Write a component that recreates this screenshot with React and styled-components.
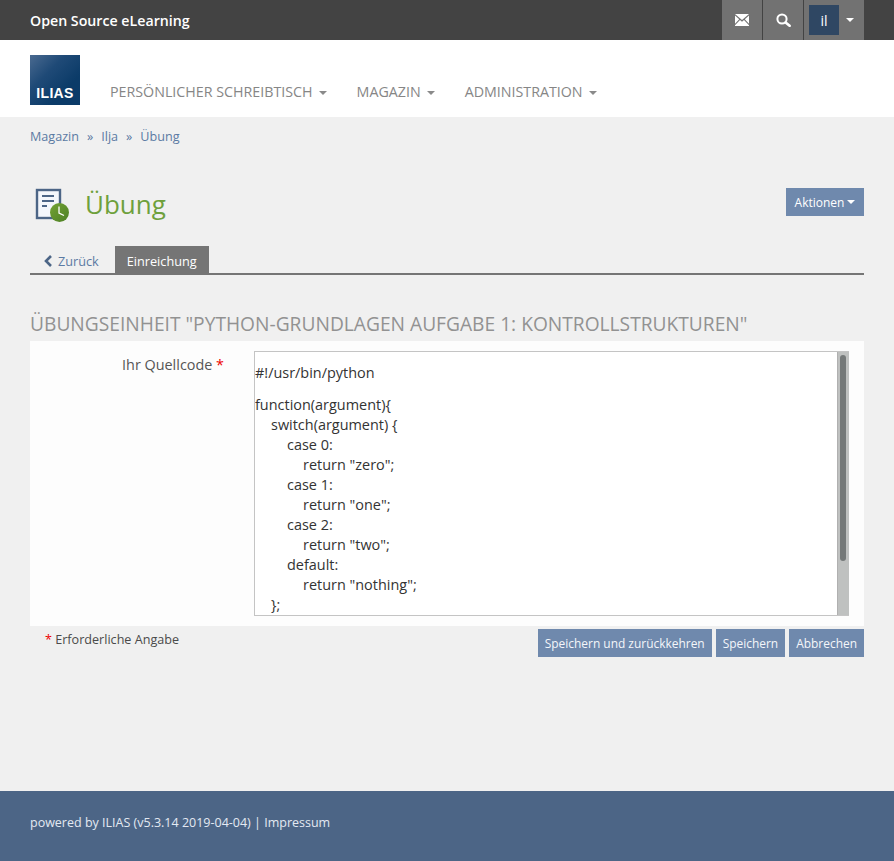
import React from 'react'
import styled, { createGlobalStyle } from 'styled-components'

const GlobalStyle = createGlobalStyle`
  html, body {
    margin: 0;
    padding: 0;
    background: #f0f0f0;
    font-family: "Open Sans", "Noto Sans", sans-serif;
    font-size: 13px;
    color: #4a4a4a;
  }
  * { box-sizing: border-box; }
`

const codeLines = [
  [0, 'function(argument){'],
  [1, 'switch(argument) {'],
  [2, 'case 0:'],
  [3, 'return "zero";'],
  [2, 'case 1:'],
  [3, 'return "one";'],
  [2, 'case 2:'],
  [3, 'return "two";'],
  [2, 'default:'],
  [3, 'return "nothing";'],
  [1, '};'],
]

const App = () => {
  return (
    <Page>
      <GlobalStyle />
      <TopBar>
        <Brand>Open Source eLearning</Brand>
        <TopActions>
          <TopButton>
            <svg width="14" height="12" viewBox="0 0 14 12">
              <path fill="#fff" d="M0 0h14L7 6zM0 1.6l4.2 3.7L0 9.8zM14 1.6v8.2L9.8 5.3zM5 6l2 1.8L9 6l5 5.2V12H0v-.8z" />
            </svg>
          </TopButton>
          <TopButton>
            <svg width="15" height="14" viewBox="0 0 15 14" fill="none" stroke="#fff">
              <circle cx="6" cy="6" r="4.6" strokeWidth="2" />
              <path d="m9.6 9.4 4 3.4" strokeWidth="2.6" strokeLinecap="round" />
            </svg>
          </TopButton>
          <UserButton>
            <Avatar>il</Avatar>
            <Caret $color="#fff" />
          </UserButton>
        </TopActions>
      </TopBar>

      <Header>
        <Logo>ILIAS</Logo>
        <Nav>
          <NavItem>PERSÖNLICHER SCHREIBTISCH<NavCaret $color="#8a8a8a" /></NavItem>
          <NavItem>MAGAZIN<NavCaret $color="#8a8a8a" /></NavItem>
          <NavItem>ADMINISTRATION<NavCaret $color="#8a8a8a" /></NavItem>
        </Nav>
      </Header>

      <Main>
        <Breadcrumbs>
          <a>Magazin</a>
          <Sep>»</Sep>
          <a>Ilja</a>
          <Sep>»</Sep>
          <a>Übung</a>
        </Breadcrumbs>

        <TitleRow>
          <TitleLeft>
            <svg width="36" height="36" viewBox="0 0 36 36">
              <defs>
                <linearGradient id="clockFill" x1="0" y1="0" x2="1" y2="1">
                  <stop offset="0" stopColor="#74a334" />
                  <stop offset="1" stopColor="#4c7f25" />
                </linearGradient>
              </defs>
              <rect x="2" y="3" width="23" height="28" fill="#f3f6fb" stroke="#4c6586" strokeWidth="2.4" />
              <path d="M7 8h12v2H7zM7 13h12v2H7zM7 18h5v2H7z" fill="#4c6586" />
              <circle cx="24.5" cy="25.5" r="9.5" fill="url(#clockFill)" />
              <path d="M24 19.5V26l5 2.5" fill="none" stroke="#fff" strokeWidth="1.3" />
            </svg>
            <Title>Übung</Title>
          </TitleLeft>
          <ActionButton>Aktionen <Caret $color="#fff" /></ActionButton>
        </TitleRow>

        <Tabs>
          <BackTab>
            <svg width="10" height="12" viewBox="0 0 10 12">
              <path d="M8 1 3 6l5 5" fill="none" stroke="#4c6586" strokeWidth="2.6" />
            </svg>
            Zurück
          </BackTab>
          <ActiveTab>Einreichung</ActiveTab>
        </Tabs>

        <SectionTitle>ÜBUNGSEINHEIT "PYTHON-GRUNDLAGEN AUFGABE 1: KONTROLLSTRUKTUREN"</SectionTitle>

        <FormPanel>
          <FieldLabel>Ihr Quellcode <Required>*</Required></FieldLabel>
          <Editor>
            <Code>
              <CodePara>#!/usr/bin/python</CodePara>
              {codeLines.map(([indent, text], i) => (
                <CodeLine key={i} $indent={indent}>{text}</CodeLine>
              ))}
            </Code>
            <Track>
              <Thumb />
            </Track>
          </Editor>
        </FormPanel>

        <FormFooter>
          <RequiredNote><Required>*</Required> Erforderliche Angabe</RequiredNote>
          <Buttons>
            <FormButton>Speichern und zurückkehren</FormButton>
            <FormButton>Speichern</FormButton>
            <FormButton>Abbrechen</FormButton>
          </Buttons>
        </FormFooter>
      </Main>

      <Footer>
        <span>powered by ILIAS (v5.3.14 2019-04-04) | Impressum</span>
      </Footer>
    </Page>
  )
}

export default App

const Page = styled.div`
  width: 894px;
  height: 861px;
  display: flex;
  flex-direction: column;
  overflow: hidden;
`

const TopBar = styled.div`
  height: 40px;
  flex: none;
  background: #434343;
  padding: 0 30px;
  display: flex;
  align-items: center;
  justify-content: space-between;
`

const Brand = styled.div`
  color: #fff;
  font-size: 14.2px;
  font-weight: 600;
`

const TopActions = styled.div`
  display: flex;
  height: 40px;
  gap: 1px;
`

const TopButton = styled.div`
  width: 40px;
  background: #727272;
  display: flex;
  align-items: center;
  justify-content: center;
`

const UserButton = styled.div`
  width: 60px;
  background: #727272;
  padding-left: 5px;
  display: flex;
  align-items: center;
`

const Avatar = styled.div`
  width: 30px;
  height: 30px;
  background: #2f4763;
  color: #fff;
  font-size: 14px;
  display: flex;
  align-items: center;
  justify-content: center;
  margin-right: 7px;
`

const Caret = styled.span`
  display: inline-block;
  width: 0;
  height: 0;
  vertical-align: middle;
  border-top: 4px solid ${p => p.$color};
  border-left: 4px solid transparent;
  border-right: 4px solid transparent;
`

const NavCaret = styled(Caret)`
  margin-left: 6px;
`

const Header = styled.div`
  height: 77px;
  flex: none;
  background: #fff;
  padding: 15px 30px 0;
  display: flex;
`

const Logo = styled.div`
  width: 50px;
  height: 50px;
  background: linear-gradient(135deg, #4a6a90 0%, #1f4a77 35%, #0b3b68 70%);
  color: #fff;
  font-family: "Liberation Sans", Arial, sans-serif;
  font-weight: 700;
  font-size: 14px;
  letter-spacing: 0.3px;
  display: flex;
  align-items: flex-end;
  justify-content: center;
  padding-bottom: 4px;
`

const Nav = styled.div`
  display: flex;
  gap: 30px;
  margin-left: 30px;
  padding-top: 27px;
`

const NavItem = styled.div`
  color: #868686;
  font-size: 14.25px;
  line-height: 20px;
  white-space: nowrap;
`

const Main = styled.div`
  flex: 1;
  padding: 0 30px;
`

const Breadcrumbs = styled.div`
  height: 39px;
  display: flex;
  align-items: center;
  color: #5b7aa3;
  font-size: 12.6px;
`

const Sep = styled.span`
  margin: 0 8px;
`

const TitleRow = styled.div`
  margin-top: 29px;
  height: 40px;
  display: flex;
  justify-content: space-between;
  align-items: flex-start;
`

const TitleLeft = styled.div`
  display: flex;
  align-items: center;
  padding-left: 5px;
  gap: 15px;
  height: 40px;
`

const Title = styled.h1`
  margin: 0 0 2px -1px;
  font-size: 26px;
  font-weight: 400;
  color: #6ea03c;
  line-height: 36px;
`

const ActionButton = styled.div`
  margin-top: 3px;
  height: 28px;
  width: 78px;
  background: #6f89ad;
  color: #fff;
  font-size: 12px;
  display: flex;
  align-items: center;
  justify-content: center;
  gap: 3px;
`

const Tabs = styled.div`
  margin-top: 21px;
  height: 29px;
  border-bottom: 2px solid #757575;
  display: flex;
  align-items: stretch;
`

const BackTab = styled.div`
  display: flex;
  align-items: center;
  gap: 5px;
  padding: 2px 16px 0 13px;
  color: #5b7aa3;
  font-size: 12.7px;
`

const ActiveTab = styled.div`
  background: #757575;
  color: #fff;
  font-size: 12.7px;
  padding: 2px 12px 0;
  display: flex;
  align-items: center;
`

const SectionTitle = styled.h2`
  margin: 37px 0 0;
  height: 29px;
  color: #929292;
  font-size: 19.2px;
  font-weight: 400;
  line-height: 24px;
  white-space: nowrap;
`

const FormPanel = styled.div`
  background: #fdfdfd;
  height: 285px;
  padding: 10px 15px 10px 0;
  display: flex;
`

const FieldLabel = styled.div`
  width: 224px;
  flex: none;
  padding: 4px 30px 0 0;
  text-align: right;
  font-size: 14.4px;
  line-height: 20px;
  color: #555;
  white-space: nowrap;
`

const Required = styled.span`
  color: #e00;
`

const Editor = styled.div`
  width: 595px;
  height: 265px;
  background: #fff;
  border: 1px solid #c4c4c4;
  border-right: none;
  display: flex;
  overflow: hidden;
`

const Code = styled.div`
  flex: 1;
  padding-top: 11px;
  color: #333;
  font-size: 14.45px;
  line-height: 20px;
`

const CodePara = styled.div`
  margin-bottom: 12px;
`

const CodeLine = styled.div`
  padding-left: ${p => p.$indent * 16}px;
  white-space: nowrap;
`

const Track = styled.div`
  width: 12px;
  flex: none;
  background: #bfc1c0;
  border-left: 1px solid #b0b0b0;
  padding: 3px 0 0 2px;
`

const Thumb = styled.div`
  width: 6px;
  height: 206px;
  background: #757979;
  border-radius: 3px;
`

const FormFooter = styled.div`
  display: flex;
  justify-content: space-between;
  padding-top: 3px;
`

const RequiredNote = styled.div`
  padding: 2px 0 0 15px;
  font-size: 12.6px;
  line-height: 18px;
`

const Buttons = styled.div`
  display: flex;
  gap: 4px;
`

const FormButton = styled.div`
  height: 28px;
  padding: 0 7px;
  background: #6f89ad;
  color: #f4f6fa;
  font-size: 11.95px;
  display: flex;
  align-items: center;
`

const Footer = styled.div`
  height: 70px;
  flex: none;
  background: #4c6586;
  color: #e3e9f2;
  padding: 0 30px 8px;
  font-size: 12.5px;
  display: flex;
  align-items: center;
`
